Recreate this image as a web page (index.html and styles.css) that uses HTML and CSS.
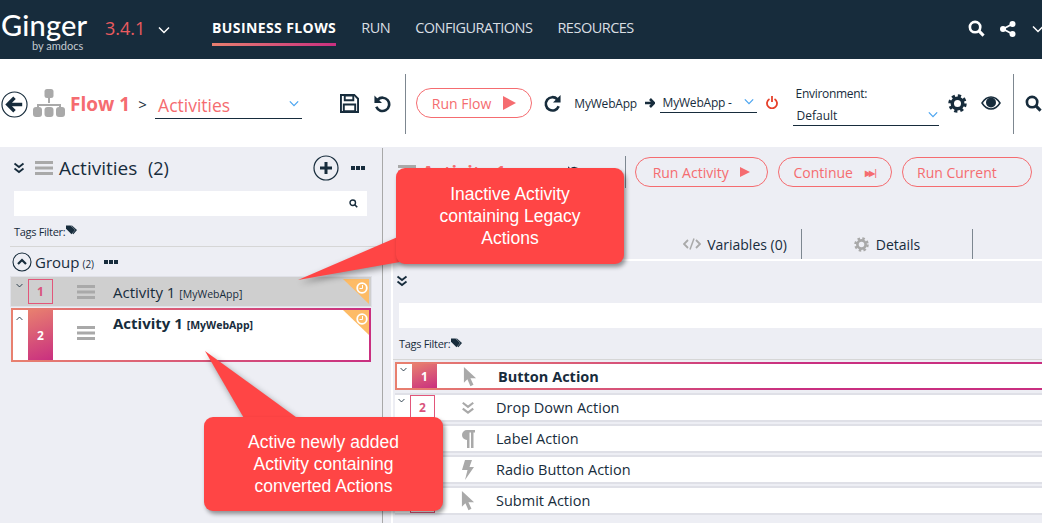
FILE: index.html
```html
<!DOCTYPE html>
<html lang="en">
<head>
  <meta charset="UTF-8">
  <title>Ginger</title>
  <link rel="stylesheet" href="styles.css">
</head>
<body>
  <svg class="defs" width="0" height="0">
    <defs>
      <linearGradient id="redPink" x1="0" y1="0" x2="1" y2="1">
        <stop offset="0" stop-color="#e8806f"/>
        <stop offset="1" stop-color="#c92f80"/>
      </linearGradient>
      <symbol id="i-bars" viewBox="0 0 18 14"><path d="M0 0h18v3H0zM0 5.500h18v3H0zM0 11h18v3H0z" fill="#a9a9a9"/></symbol>
      <symbol id="i-double" viewBox="0 0 12 12"><path d="M1.500 1.500 6 5l4.500-3.500M1.500 6.500 6 10l4.500-3.500" fill="none" stroke="currentColor" stroke-width="1.800"/></symbol>
      <symbol id="i-chev" viewBox="0 0 12 8"><path d="M1 1.500 6 6.500l5-5" fill="none" stroke="currentColor" stroke-width="1.500"/></symbol>
      <symbol id="i-mag" viewBox="0 0 18 18"><circle cx="7.500" cy="7.500" r="5.500" fill="none" stroke="currentColor" stroke-width="2.800"/><path d="m11.500 11.500 5 5" stroke="currentColor" stroke-width="3.200"/></symbol>
      <symbol id="i-tag" viewBox="0 0 12 10"><path d="M0 0h5l5 5-4 4.500-6-6z" fill="#172c3c"/><path d="M6.500 0 12 5l-4 4.500-1-.8L10.200 5 5.500 0z" fill="#172c3c"/></symbol>
      <symbol id="i-cursor" viewBox="0 0 14 23"><path d="M0 0v18l4-4 3.500 8 3.500-1.500L7.500 13H14z" fill="#a9a9a9"/></symbol>
      <symbol id="i-undo" viewBox="0 0 20 20"><path d="M5 6a7 7 0 1 1-1.500 7.500" fill="none" stroke="currentColor" stroke-width="2.800"/><path d="M1.500 1.500v8h8z" fill="currentColor"/></symbol>
      <symbol id="i-gear" viewBox="0 0 20 20"><circle cx="10" cy="10" r="5.500" fill="none" stroke="currentColor" stroke-width="3.600"/><circle cx="10" cy="10" r="8" fill="none" stroke="currentColor" stroke-width="3.400" stroke-dasharray="3.300 3"/></symbol>
      <symbol id="i-clock" viewBox="0 0 12 12"><circle cx="6" cy="6" r="4.800" fill="none" stroke="#fff" stroke-width="1.800"/><path d="M6.500 3v3.500H3.500" fill="none" stroke="#fff"/></symbol>
    </defs>
  </svg>

  <header class="topbar">
    <div class="logo">
      <span class="logo-name">Ginger</span>
      <span class="logo-by">by amdocs</span>
    </div>
    <span class="version">3.4.1</span>
    <svg class="version-chev"><use href="#i-chev"/></svg>
    <nav class="nav">
      <a class="nav-item active">BUSINESS FLOWS</a>
      <a class="nav-item">RUN</a>
      <a class="nav-item">CONFIGURATIONS</a>
      <a class="nav-item">RESOURCES</a>
    </nav>
    <div class="top-icons">
      <svg class="top-search"><use href="#i-mag"/></svg>
      <svg class="top-share" viewBox="0 0 16 16">
        <circle cx="12.500" cy="3" r="3" fill="#fff"/><circle cx="3" cy="8" r="3" fill="#fff"/><circle cx="12.500" cy="13" r="3" fill="#fff"/>
        <path d="M12.500 3 3 8l9.500 5" fill="none" stroke="#fff" stroke-width="1.800"/>
      </svg>
      <svg class="top-chev"><use href="#i-chev"/></svg>
    </div>
  </header>

  <section class="toolbar">
    <svg class="back" viewBox="0 0 28 28">
      <circle cx="14" cy="14" r="13" fill="none" stroke="#172c3c" stroke-width="1.200"/>
      <path d="M14 7 7 14l7 7M8 14h14" fill="none" stroke="#172c3c" stroke-width="3.600"/>
    </svg>
    <svg class="flow-icon" viewBox="0 0 32 28">
      <path d="M16 8v6M5 20v-4h22v4" fill="none" stroke="#a9a9a9" stroke-width="2"/>
      <rect x="11.500" y="0" width="9" height="9" rx="2.500" fill="#a9a9a9"/>
      <rect x="0" y="18" width="9" height="10" rx="3" fill="#a9a9a9"/>
      <rect x="11.500" y="18" width="9" height="10" rx="3" fill="#a9a9a9"/>
      <rect x="23" y="18" width="9" height="10" rx="3" fill="#a9a9a9"/>
    </svg>
    <span class="flow-name">Flow 1</span>
    <span class="crumb">&gt;</span>
    <div class="crumb-select">
      <span>Activities</span>
      <svg class="blue-chev"><use href="#i-chev"/></svg>
    </div>
    <svg class="save" viewBox="0 0 20 20">
      <path d="M1 1h14l4 4v14H1z" fill="none" stroke="#172c3c" stroke-width="2"/>
      <path d="M5 1.500h9v5H5zM4 11h12v7H4z" fill="none" stroke="#172c3c" stroke-width="2"/>
    </svg>
    <svg class="undo"><use href="#i-undo"/></svg>
    <span class="sep sep-a"></span>
    <button class="run-btn run-flow">Run Flow <i class="play"></i></button>
    <svg class="redo"><use href="#i-undo"/></svg>
    <span class="app-name">MyWebApp</span>
    <svg class="app-arrow" viewBox="0 0 10 10"><path d="M5 1l4 4-4 4M0 5h8" fill="none" stroke="#172c3c" stroke-width="2.600"/></svg>
    <div class="app-select">
      <span>MyWebApp -</span>
      <svg class="blue-chev"><use href="#i-chev"/></svg>
    </div>
    <svg class="power" viewBox="0 0 12 13">
      <path d="M3.500 3a5 5 0 1 0 5 0" fill="none" stroke="#e6402a" stroke-width="1.800"/>
      <path d="M6 0v6" stroke="#e6402a" stroke-width="1.800"/>
    </svg>
    <div class="env">
      <span class="env-label">Environment:</span>
      <div class="env-select">
        <span>Default</span>
        <svg class="blue-chev"><use href="#i-chev"/></svg>
      </div>
    </div>
    <svg class="gear"><use href="#i-gear"/></svg>
    <svg class="eye" viewBox="0 0 20 14">
      <path d="M1 7c2.500-4 5.500-6 9-6s6.500 2 9 6c-2.500 4-5.500 6-9 6s-6.500-2-9-6z" fill="none" stroke="#172c3c" stroke-width="1.500"/>
      <circle cx="10" cy="6.500" r="5" fill="#172c3c"/>
    </svg>
    <span class="sep sep-b"></span>
    <svg class="cut-search"><use href="#i-mag"/></svg>
  </section>

  <main class="main">
    <aside class="left">
      <div class="left-head">
        <svg class="dbl"><use href="#i-double"/></svg>
        <svg class="bars-title"><use href="#i-bars"/></svg>
        <span class="left-title">Activities</span>
        <span class="left-count">(2)</span>
        <svg class="add" viewBox="0 0 26 26">
          <circle cx="13" cy="13" r="12" fill="none" stroke="#172c3c" stroke-width="1.200"/>
          <path d="M13 7v12M7 13h12" stroke="#172c3c" stroke-width="3"/>
        </svg>
        <span class="dots"><i></i><i></i><i></i></span>
      </div>
      <div class="search-box">
        <svg class="search-mag"><use href="#i-mag"/></svg>
      </div>
      <div class="tags left-tags">Tags Filter:<svg class="tag"><use href="#i-tag"/></svg></div>
      <div class="group">
        <svg class="group-toggle" viewBox="0 0 20 20">
          <circle cx="10" cy="10" r="9" fill="none" stroke="#172c3c" stroke-width="1.100"/>
          <path d="M6 12l4-4 4 4" fill="none" stroke="#172c3c" stroke-width="2.200"/>
        </svg>
        <span class="group-name">Group</span>
        <span class="group-count">(2)</span>
        <span class="dots"><i></i><i></i><i></i></span>
      </div>
      <div class="activity inactive">
        <svg class="row-chev"><use href="#i-chev"/></svg>
        <span class="num num-line">1</span>
        <svg class="row-bars"><use href="#i-bars"/></svg>
        <span class="activity-name">Activity 1 <small>[MyWebApp]</small></span>
        <span class="corner"><svg class="clock"><use href="#i-clock"/></svg></span>
      </div>
      <div class="activity selected">
        <svg class="row-chev up"><use href="#i-chev"/></svg>
        <span class="num num-fill">2</span>
        <svg class="row-bars"><use href="#i-bars"/></svg>
        <span class="activity-name">Activity 1 <small>[MyWebApp]</small></span>
        <span class="corner"><svg class="clock"><use href="#i-clock"/></svg></span>
      </div>
    </aside>

    <section class="right">
      <div class="right-head">
        <svg class="bars-title"><use href="#i-bars"/></svg>
        <span class="right-title">Activity 1</span>
        <svg class="right-undo"><use href="#i-undo"/></svg>
        <span class="dots"><i></i><i></i><i></i></span>
        <span class="sep sep-c"></span>
        <button class="run-btn run-activity">Run Activity <i class="play small"></i></button>
        <button class="run-btn run-continue">Continue <b class="skip">&#9654;&#9654;|</b></button>
        <button class="run-btn run-current">Run Current</button>
      </div>
      <div class="tabs">
        <span class="tab tab-vars"><svg class="code" viewBox="0 0 18 12"><path d="M5 2 1 6l4 4M13 2l4 4-4 4" fill="none" stroke="#a9a9a9" stroke-width="1.800"/><path d="M7 11.500 11 .5" stroke="#a9a9a9" stroke-width="1.500"/></svg>Variables (0)</span>
        <span class="tab tab-details"><svg class="gear-small"><use href="#i-gear"/></svg>Details</span>
      </div>
      <div class="actions-panel">
        <svg class="dbl"><use href="#i-double"/></svg>
        <div class="search-box wide"></div>
        <div class="tags right-tags">Tags Filter:<svg class="tag"><use href="#i-tag"/></svg></div>
        <div class="action current">
          <svg class="row-chev"><use href="#i-chev"/></svg>
          <span class="num num-fill">1</span>
          <svg class="action-icon"><use href="#i-cursor"/></svg>
          <span class="action-name">Button Action</span>
        </div>
        <div class="action">
          <svg class="row-chev"><use href="#i-chev"/></svg>
          <span class="num num-line">2</span>
          <svg class="action-icon dd"><use href="#i-double"/></svg>
          <span class="action-name">Drop Down Action</span>
        </div>
        <div class="action">
          <svg class="row-chev"><use href="#i-chev"/></svg>
          <span class="num num-line">3</span>
          <svg class="action-icon" viewBox="0 0 14 18"><path d="M6 0h8v2.500h-1.500V18H10V2.500H8.500V18H6v-8a5 5 0 0 1 0-10z" fill="#a9a9a9"/></svg>
          <span class="action-name">Label Action</span>
        </div>
        <div class="action">
          <svg class="row-chev"><use href="#i-chev"/></svg>
          <span class="num num-line">4</span>
          <svg class="action-icon" viewBox="0 0 14 20"><path d="M4 0h7L8.500 7H13L4 20l2.500-10H1z" fill="#a9a9a9"/></svg>
          <span class="action-name">Radio Button Action</span>
        </div>
        <div class="action">
          <svg class="row-chev"><use href="#i-chev"/></svg>
          <span class="num num-line">5</span>
          <svg class="action-icon"><use href="#i-cursor"/></svg>
          <span class="action-name">Submit Action</span>
        </div>
      </div>
    </section>
  </main>

  <!-- annotations drawn over the screenshot -->
  <svg class="tails" viewBox="0 0 1042 523">
    <polygon points="298,280 400,236 400,262"/>
    <polygon points="205,351 245,420 300,420"/>
  </svg>
  <div class="callout callout-top">Inactive Activity containing Legacy Actions</div>
  <div class="callout callout-bottom">Active newly added Activity containing converted Actions</div>
</body>
</html>
```

FILE: styles.css
```css
* {
  box-sizing: border-box;
  font-family: "Open Sans", "Noto Sans", sans-serif;
}

html, body {
  margin: 0;
  height: 523px;
  overflow: hidden;
  background: #edeef4;
  color: #172c3c;
}

svg {
  display: block;
  flex: none;
}

.defs {
  position: absolute;
}

/* top bar */
.topbar {
  height: 59px;
  background: #172c3c;
  display: flex;
  align-items: center;
  color: #fff;
}

.logo {
  width: 105px;
  height: 59px;
  padding-left: 1px;
  display: flex;
  flex-direction: column;
}

.logo-name {
  font-family: "Lato", sans-serif;
  font-size: 29px;
  line-height: 30px;
  margin-top: 10px;
  font-weight: 500;
  letter-spacing: .2px;
}

.logo-by {
  font-family: "Lato", sans-serif;
  font-size: 11px;
  line-height: 12px;
  margin-left: 31px;
  color: #c3cad0;
}

.version {
  color: #ea5b5f;
  font-size: 18px;
  width: 53px;
  margin-top: -4px;
}

.version-chev {
  width: 12px;
  height: 8px;
  color: #fff;
}

.nav {
  display: flex;
  margin-left: 42px;
  height: 59px;
}

.nav-item {
  font-size: 14.500px;
  color: #d9dfe3;
  margin-right: 25px;
  padding-top: 18px;
  letter-spacing: -.5px;
}

.nav-item.active {
  color: #fff;
  font-weight: 700;
  font-size: 14px;
  letter-spacing: .4px;
  height: 46px;
  border-bottom: 3px solid;
  border-image: linear-gradient(to right, #e8806f, #c92f80) 1;
}

.top-icons {
  margin-left: auto;
  display: flex;
  align-items: center;
  margin-top: -2px;
}

.top-search {
  width: 17px;
  height: 17px;
  margin-right: 15px;
}

.top-share {
  width: 16px;
  height: 16px;
  margin-right: 16px;
}

.top-chev {
  width: 12px;
  height: 8px;
  margin-right: -2px;
}

/* toolbar */
.toolbar {
  height: 89px;
  background: #fff;
  display: flex;
  align-items: center;
  padding-left: 1px;
  overflow: hidden;
  border-bottom: 1px solid #edeef4;
}

.back {
  width: 27px;
  height: 27px;
  margin-right: 5px;
  margin-top: 2px;
}

.flow-icon {
  width: 32px;
  height: 28px;
  margin-right: 5px;
}

.flow-name {
  color: #f56c70;
  font-weight: 700;
  font-size: 19px;
  width: 69px;
  margin-top: 2px;
}

.crumb {
  font-size: 15px;
  width: 17px;
  margin-top: 2px;
}

.crumb-select {
  width: 148px;
  height: 27px;
  border-bottom: 1px solid #172c3c;
  display: flex;
  align-items: center;
  justify-content: space-between;
  padding: 0 3px;
  color: #f56c70;
  font-size: 17.500px;
  margin-top: 4px;
}

.blue-chev {
  width: 10px;
  height: 7px;
  color: #4ca5f0;
  margin-bottom: 3px;
}

.save {
  width: 19px;
  height: 19px;
  margin-left: 38px;
  margin-top: 1px;
}

.undo {
  width: 19px;
  height: 19px;
  color: #172c3c;
  margin-left: 14px;
}

.sep {
  width: 1px;
  background: #7d8790;
  display: block;
}

.sep-a {
  height: 60px;
  margin: 1px 0 0 13px;
}

.run-btn {
  background: transparent;
  border: 1px solid #f56c70;
  border-radius: 16px;
  color: #f56c70;
  font-size: 14px;
  height: 30px;
  padding: 0;
  display: flex;
  align-items: center;
  justify-content: center;
  white-space: pre;
}

.run-flow {
  width: 118px;
  margin: 0 0 0 10px;
  background: #fff;
}

.play {
  width: 0;
  height: 0;
  margin-left: 8px;
  border-left: 13px solid #f56c70;
  border-top: 7px solid transparent;
  border-bottom: 7px solid transparent;
}

.play.small {
  border-left-width: 10px;
  border-top-width: 5px;
  border-bottom-width: 5px;
}

.redo {
  width: 19px;
  height: 20px;
  color: #172c3c;
  margin-left: 11px;
  transform: scaleX(-1);
}

.app-name {
  font-size: 12px;
  margin-left: 12px;
  width: 71px;
  letter-spacing: -.2px;
}

.app-arrow {
  width: 10px;
  height: 10px;
}

.app-select {
  width: 98px;
  height: 20px;
  margin: 0 0 0 5px;
  border-bottom: 1px solid #172c3c;
  display: flex;
  align-items: center;
  justify-content: space-between;
  padding: 0 3px;
  font-size: 12px;
  letter-spacing: -.2px;
}

.power {
  width: 12px;
  height: 13px;
  margin-left: 9px;
  margin-top: -1px;
}

.env {
  margin-left: 15px;
  display: flex;
  flex-direction: column;
  width: 148px;
  font-size: 12px;
  margin-top: 4px;
}

.env-label {
  padding-left: 3px;
  letter-spacing: -.3px;
  line-height: 18px;
}

.env-select {
  height: 23px;
  border-bottom: 1px solid #172c3c;
  display: flex;
  align-items: center;
  justify-content: space-between;
  padding: 4px 1px 0 4px;
}

.gear {
  width: 19px;
  height: 19px;
  color: #172c3c;
  margin-left: 9px;
}

.eye {
  width: 20px;
  height: 14px;
  margin-left: 14px;
}

.sep-b {
  height: 60px;
  margin: 1px 0 0 12px;
  flex: none;
}

.cut-search {
  width: 17px;
  height: 17px;
  margin-left: 11px;
  color: #172c3c;
  flex: none;
}

/* main area */
.main {
  display: flex;
  height: 375px;
  overflow: hidden;
}

.left {
  width: 383px;
  flex: none;
  border-right: 1px solid #a8a8a8;
  padding-left: 10px;
}

.left-head {
  height: 40px;
  display: flex;
  align-items: center;
  padding: 0 0 0 3px;
}

.dbl {
  width: 12px;
  height: 12px;
  color: #172c3c;
}

.bars-title {
  width: 18px;
  height: 14px;
  margin-left: 10px;
}

.left-title {
  font-size: 19px;
  margin-left: 6px;
  width: 89px;
}

.left-count {
  font-size: 18px;
  width: 165px;
}

.add {
  width: 26px;
  height: 26px;
  margin-right: 12px;
}

.dots {
  display: flex;
  gap: 1px;
}

.dots i {
  width: 4px;
  height: 4px;
  background: #172c3c;
}

.search-box {
  margin-left: 4px;
  width: 353px;
  height: 25px;
  margin-top: 3px;
  background: #fff;
  display: flex;
  align-items: center;
  justify-content: flex-end;
  padding-right: 9px;
}

.search-mag {
  width: 9px;
  height: 9px;
  color: #172c3c;
}

.tags {
  display: flex;
  align-items: center;
  font-size: 11px;
  letter-spacing: -.3px;
  height: 31px;
  border-bottom: 1px solid #d6d6d6;
}

.left-tags {
  padding-left: 4px;
}

.tag {
  width: 11px;
  height: 10px;
  margin-left: 1px;
  margin-top: -2px;
}

.group {
  height: 30px;
  display: flex;
  align-items: center;
  padding-left: 2px;
}

.group-toggle {
  width: 20px;
  height: 20px;
}

.group-name {
  font-size: 15px;
  margin-left: 3px;
}

.group-count {
  font-size: 10px;
  margin: 3px 0 0 3px;
  width: 22px;
}

.activity {
  width: 360px;
  margin-left: 1px;
  position: relative;
  display: flex;
}

.activity.inactive {
  height: 29px;
  background: #cfcfcf;
  outline: 1px solid #e0e1e8;
  align-items: center;
  padding: 0 0 0 2px;
  margin-bottom: 2px;
}

.activity.selected {
  height: 54px;
  background: #fff;
  border: 2px solid;
  border-image: linear-gradient(to right, #e8806f, #c92f80) 1;
  align-items: stretch;
}

.row-chev {
  width: 7px;
  height: 5px;
  color: #172c3c;
  margin: 3px 0 0 3px;
}

.inactive .row-chev {
  align-self: flex-start;
  margin-top: 6px;
}

.row-chev.up {
  transform: scaleY(-1);
  margin-top: 6px;
}

.num {
  width: 25px;
  flex: none;
  display: flex;
  align-items: center;
  justify-content: center;
  font-size: 12px;
  font-weight: 700;
}

.num-line {
  border: 1px solid #e2567a;
  color: #d9547c;
  background: transparent;
}

.num-fill {
  color: #fff;
  background: linear-gradient(160deg, #e8806f, #c92f80);
}

.inactive .num {
  height: 25px;
  margin-left: 5px;
}

.selected .num {
  margin-left: 5px;
}

.row-bars {
  width: 18px;
  height: 14px;
  margin-left: 24px;
}

.selected .row-bars {
  margin-top: 16px;
}

.activity-name {
  font-size: 15px;
  margin-left: 18px;
}

.selected .activity-name {
  font-weight: 700;
  margin-top: 3px;
}

.activity-name small {
  font-size: 10.500px;
}

.corner {
  position: absolute;
  top: 0;
  right: 0;
  width: 26px;
  height: 25px;
  background: #fdbb66;
  clip-path: polygon(0 0, 100% 0, 100% 100%);
}

.inactive .corner {
  top: 2px;
  right: 2px;
}

.clock {
  position: absolute;
  top: 3px;
  right: 1px;
  width: 12px;
  height: 12px;
}

/* right panel */
.right {
  flex: 1;
  min-width: 0;
  overflow: hidden;
}

.right-head {
  height: 48px;
  display: flex;
  align-items: center;
  padding: 0 0 0 15px;
}

.right-head .bars-title {
  margin-left: 0;
}

.right-title {
  color: #f56c70;
  font-weight: 700;
  font-size: 18px;
  width: 205px;
  margin-left: 6px;
}

.right-undo {
  width: 15px;
  height: 15px;
  color: #172c3c;
  margin-right: 13px;
}

.right-head .dots {
  gap: 0;
  margin-right: 15px;
}

.right-head .dots i {
  width: 4px;
  margin-right: 1px;
}

.sep-c {
  height: 32px;
  margin-right: 9px;
  flex: none;
}

.right-head .run-btn {
  flex: none;
  color: #f56c70;
  margin-right: 10px;
  height: 30px;
}

.run-activity {
  width: 133px;
}

.run-continue {
  width: 114px;
}

.run-current {
  width: 130px;
  justify-content: flex-start;
  padding-left: 14px;
}

.skip {
  font-size: 8px;
  margin-left: 8px;
  letter-spacing: -1.500px;
}

.tabs {
  height: 63px;
  position: relative;
  display: flex;
  align-items: flex-end;
  padding-left: 419px;
  border-bottom: 0;
}

.tab {
  height: 30px;
  display: flex;
  align-items: center;
  justify-content: center;
  font-size: 14px;
  border-right: 1px solid #7d8790;
}

.tab-vars {
  width: 153px;
  margin-left: -153px;
  margin-right: 0;
  padding-left: 20px;
  margin-left: -153px;
}

.tab-details {
  width: 171px;
}

.code {
  width: 18px;
  height: 12px;
  margin-right: 6px;
}

.gear-small {
  width: 15px;
  height: 15px;
  color: #a9a9a9;
  margin-right: 7px;
}

.actions-panel {
  margin-left: 8px;
  border-left: 2px solid #fff;
  border-top: 2px solid #fff;
  height: 270px;
  padding-top: 14px;
}

.actions-panel > .dbl {
  margin-left: 3px;
  margin-bottom: 16px;
}

.search-box.wide {
  width: 660px;
  margin-left: 6px;
  margin-top: 0;
}

.right-tags {
  padding-left: 6px;
  height: 32px;
  margin-left: 0;
  margin-bottom: 2px;
}

.action {
  width: 660px;
  height: 25px;
  margin: 0 0 6px 2px;
  background: #fff;
  display: flex;
  align-items: center;
  box-shadow: 0 2px 0 #dfe0e7, 0 -2px 0 #dfe0e7;
  padding-left: 15px;
  position: relative;
}

.action .row-chev {
  position: absolute;
  left: 3px;
  top: 3px;
  margin: 0;
}

.action .num {
  height: 25px;
}

.action-icon {
  width: 14px;
  height: 20px;
  margin-left: 26px;
}

.action-icon.dd {
  color: #a9a9a9;
  height: 14px;
}

.action-name {
  font-size: 14.500px;
  margin-left: 21px;
}

.action.current {
  height: 28px;
  margin-bottom: 5px;
  border: 2px solid;
  border-image: linear-gradient(to right, #e8806f, #c92f80 60%) 1;
  box-shadow: none;
  padding-left: 15px;
}

.action.current .action-name {
  font-weight: 700;
}

.action.current .num {
  height: 24px;
}

.action.current .action-icon {
  margin-top: 2px;
}

/* callouts */
.tails {
  position: absolute;
  left: 0;
  top: 0;
  width: 1042px;
  height: 523px;
  fill: #ff4545;
  filter: drop-shadow(2px 3px 3px rgba(0, 0, 0, .4));
}

.callout {
  position: absolute;
  background: #ff4545;
  color: #fff;
  font-family: "Liberation Sans", sans-serif;
  font-size: 17.500px;
  line-height: 22px;
  text-align: center;
  border-radius: 9px;
  box-shadow: 2px 3px 4px rgba(0, 0, 0, .4);
  display: flex;
  align-items: center;
  justify-content: center;
}

.callout-top {
  left: 396px;
  top: 168px;
  width: 228px;
  height: 96px;
  padding: 0 30px;
}

.callout-bottom {
  left: 204px;
  top: 417px;
  width: 239px;
  height: 94px;
  padding: 0 26px;
}
```
